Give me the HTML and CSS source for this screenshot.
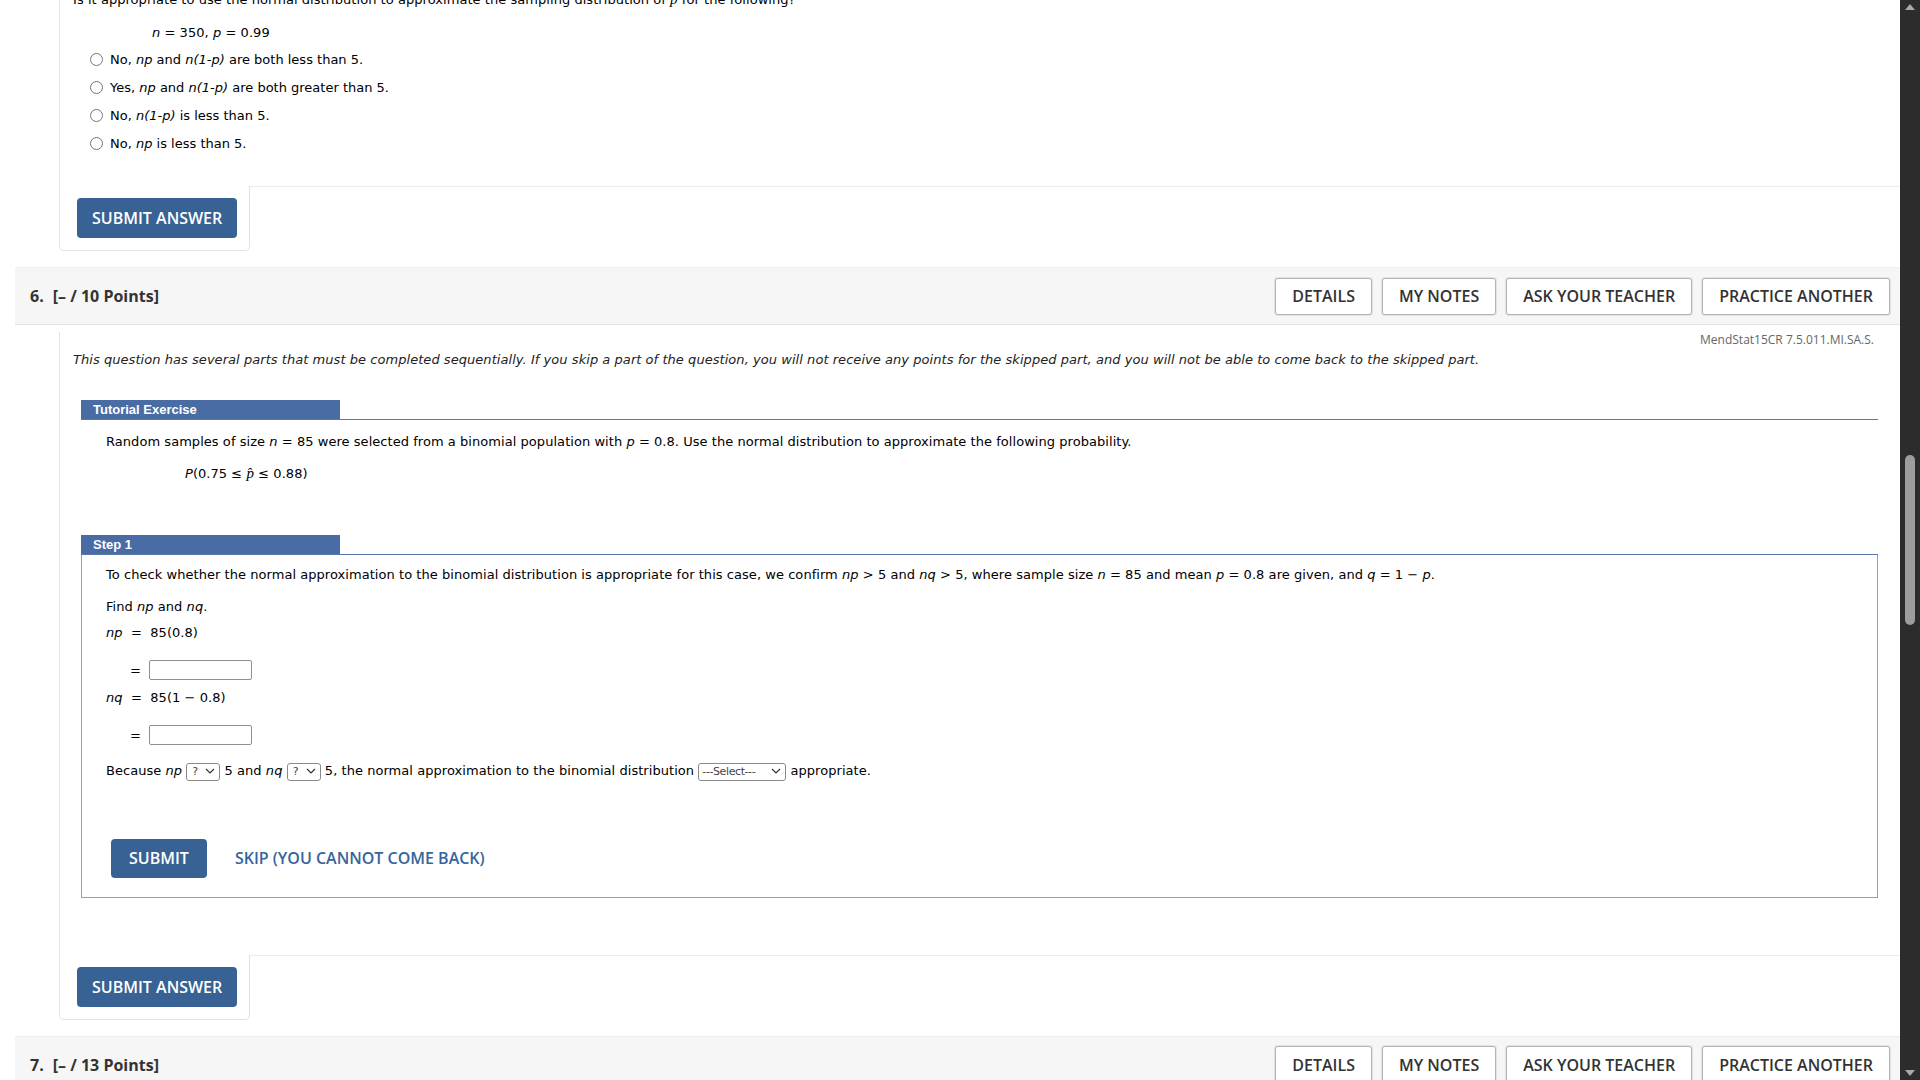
FILE: index.html
```html
<!DOCTYPE html>
<html lang="en">

<head>
  <meta charset="UTF-8" />
  <title>Assignment</title>
  <link rel="stylesheet" href="styles.css">
</head>

<body>
  <div class="page">

    <!-- question 5 (scrolled, only bottom visible) -->
    <div class="question">
      <div class="q-body q-body-short">
        <p class="line">Is it appropriate to use the normal distribution to approximate the sampling distribution of <span class="phat">p&#770;</span> for the following?</p>
        <p class="line given"><i>n</i> = 350, <i>p</i> = 0.99</p>
        <div class="choices">
          <label class="choice"><input type="radio" name="q5" class="radio" />No, <i>np</i> and <i>n(1-p)</i> are both less than 5.</label>
          <label class="choice"><input type="radio" name="q5" class="radio" />Yes, <i>np</i> and <i>n(1-p)</i> are both greater than 5.</label>
          <label class="choice"><input type="radio" name="q5" class="radio" />No, <i>n(1-p)</i> is less than 5.</label>
          <label class="choice"><input type="radio" name="q5" class="radio" />No, <i>np</i> is less than 5.</label>
        </div>
      </div>
      <div class="q-foot">
        <div class="submit-tab"><button class="submit-btn">SUBMIT ANSWER</button></div>
        <div class="foot-rest"></div>
      </div>
    </div>

    <!-- question 6 -->
    <div class="question">
      <div class="q-head">
        <span class="q-num">6.</span>
        <span class="q-points">[&ndash; / 10 Points]</span>
        <div class="q-tools">
          <button class="tool-btn">DETAILS</button>
          <button class="tool-btn">MY NOTES</button>
          <button class="tool-btn">ASK YOUR TEACHER</button>
          <button class="tool-btn">PRACTICE ANOTHER</button>
        </div>
      </div>

      <div class="q-body">
        <div class="qid">MendStat15CR 7.5.011.MI.SA.S.</div>
        <p class="note">This question has several parts that must be completed sequentially. If you skip a part of the question, you will not receive any points for the skipped part, and you will not be able to come back to the skipped part.</p>

        <div class="tutorial">
          <div class="label-row"><div class="label">Tutorial Exercise</div></div>
          <p class="line tut-text">Random samples of size <i>n</i> = 85 were selected from a binomial population with <i>p</i> = 0.8. Use the normal distribution to approximate the following probability.</p>
          <p class="line tut-prob"><i>P</i>(0.75 &le; <span class="phat">p&#770;</span> &le; 0.88)</p>
        </div>

        <div class="step">
          <div class="label-row"><div class="label">Step 1</div></div>
          <div class="step-box">
            <p class="line">To check whether the normal approximation to the binomial distribution is appropriate for this case, we confirm <i>np</i> &gt; 5 and <i>nq</i> &gt; 5, where sample size <i>n</i> = 85 and mean <i>p</i> = 0.8 are given, and <i>q</i> = 1 &minus; <i>p</i>.</p>
            <p class="line find">Find <i>np</i> and <i>nq</i>.</p>
            <p class="line calc"><i>np</i> &nbsp;= &nbsp;85(0.8)</p>
            <div class="eq-row"><span class="eq">=</span><input type="text" class="answer" /></div>
            <p class="line calc-2"><i>nq</i> &nbsp;= &nbsp;85(1 &minus; 0.8)</p>
            <div class="eq-row"><span class="eq">=</span><input type="text" class="answer" /></div>
            <p class="line because">Because <i>np</i>
              <span class="pick-wrap"><select class="pick"><option>?</option></select><svg class="chev" viewBox="0 0 10 6"><path d="M1 1 L5 5 L9 1" /></svg></span>
              5 and <i>nq</i>
              <span class="pick-wrap"><select class="pick"><option>?</option></select><svg class="chev" viewBox="0 0 10 6"><path d="M1 1 L5 5 L9 1" /></svg></span>
              5, the normal approximation to the binomial distribution
              <span class="pick-wrap"><select class="pick pick-wide"><option>---Select---</option></select><svg class="chev" viewBox="0 0 10 6"><path d="M1 1 L5 5 L9 1" /></svg></span>
              appropriate.</p>
            <div class="actions">
              <button class="step-submit">SUBMIT</button>
              <a class="skip" href="#">SKIP (YOU CANNOT COME BACK)</a>
            </div>
          </div>
        </div>
      </div>

      <div class="q-foot">
        <div class="submit-tab"><button class="submit-btn">SUBMIT ANSWER</button></div>
        <div class="foot-rest"></div>
      </div>
    </div>

    <!-- question 7 -->
    <div class="question">
      <div class="q-head">
        <span class="q-num">7.</span>
        <span class="q-points">[&ndash; / 13 Points]</span>
        <div class="q-tools">
          <button class="tool-btn">DETAILS</button>
          <button class="tool-btn">MY NOTES</button>
          <button class="tool-btn">ASK YOUR TEACHER</button>
          <button class="tool-btn">PRACTICE ANOTHER</button>
        </div>
      </div>
      <div class="q-body q-body-short"></div>
    </div>

  </div>

  <div class="scrollbar">
    <span class="arrow arrow-up"></span>
    <span class="thumb"></span>
    <span class="arrow arrow-down"></span>
  </div>
</body>

</html>
```

FILE: styles.css
```css
/* Base Reset */
* {
  box-sizing: border-box;
}

html {
  overflow: hidden;
}

body {
  margin: 0;
  background-color: #fff;
  color: #000;
  font-family: 'DejaVu Sans', Verdana, sans-serif;
  font-size: 13px;
}

.page {
  margin-top: -10px;
  margin-right: 20px;
}

.line {
  margin: 0;
  line-height: 18px;
  letter-spacing: 0.05px;
}

.phat {
  font-family: 'Liberation Serif', serif;
  font-style: italic;
  font-size: 15px;
}

/* Question blocks */
.question {
  margin-left: 15px;
}

.question + .question {
  margin-top: 16px;
}

.q-head {
  display: flex;
  align-items: center;
  height: 58px;
  padding: 0 10px 0 15px;
  background-color: #f6f6f6;
  border-top: 1px solid #efefef;
  border-bottom: 1px solid #e4e4e4;
  font-family: 'Open Sans', sans-serif;
  color: #333;
}

.q-num {
  font-size: 16px;
  font-weight: 700;
  margin-right: 9px;
}

.q-points {
  font-size: 16px;
  font-weight: 700;
}

.q-tools {
  margin-left: auto;
  display: flex;
  gap: 10px;
}

.tool-btn {
  height: 37px;
  padding: 0 16px;
  background-color: #fff;
  border: 1px solid #b4b4b4;
  border-radius: 3px;
  box-shadow: 0 0 0 1px #e2e2e2;
  font-family: 'Open Sans', sans-serif;
  font-size: 16px;
  font-weight: 600;
  color: #333;
}

.q-body {
  margin-left: 44px;
  padding: 0 22px 57px 13px;
  border-left: 1px solid #e3e3e3;
}

.q-body-short {
  padding-bottom: 28px;
}

/* Question 5 */
.given {
  margin-top: 15px;
  padding-left: 79px;
}

.choices {
  margin-top: 4px;
}

.choice {
  display: block;
  padding: 5px 0 5px 17px;
  line-height: 18px;
}

.radio {
  width: 13px;
  height: 13px;
  margin: 0 7px 0 0;
  vertical-align: -2px;
}

/* Submit footer */
.q-foot {
  display: flex;
  margin-left: 44px;
}

.submit-tab {
  padding: 12px 12px 12px 17px;
  border: 1px solid #e2e2e2;
  border-top: none;
  border-radius: 0 0 5px 5px;
}

.foot-rest {
  flex: 1;
  border-top: 1px solid #ececec;
}

.submit-btn {
  height: 40px;
  padding: 0 15px;
  background-color: #386294;
  color: #fff;
  border: none;
  border-radius: 4px;
  font-family: 'Open Sans', sans-serif;
  font-size: 16px;
  font-weight: 600;
}

/* Question 6 body */
.qid {
  margin-top: 7px;
  padding-right: 4px;
  text-align: right;
  font-family: 'Open Sans', sans-serif;
  font-size: 12px;
  line-height: 16px;
  color: #666;
}

.note {
  margin: 3px 0 0;
  font-size: 13px;
  font-style: italic;
  line-height: 17px;
  letter-spacing: 0.05px;
  color: #222;
}

.tutorial {
  margin: 32px 0 0 8px;
}

.label-row {
  border-bottom: 1px solid #5a77aa;
}

.label {
  width: 259px;
  height: 19px;
  padding-left: 12px;
  background-color: #4a6ca5;
  color: #fff;
  font-family: 'Liberation Sans', Arial, sans-serif;
  font-size: 13px;
  font-weight: bold;
  line-height: 19px;
}

.tut-text {
  margin-top: 13px;
  padding-left: 25px;
}

.tut-prob {
  margin-top: 13px;
  padding-left: 104px;
}

.step {
  margin: 52px 0 0 8px;
}

.step-box {
  padding: 11px 24px 19px 24px;
  border: 1px solid #8da1c6;
  border-top: none;
}

.find {
  margin-top: 14px;
}

.calc {
  margin-top: 8px;
}

.calc-2 {
  margin-top: 8px;
}

.eq-row {
  display: flex;
  align-items: center;
  height: 22px;
  margin-top: 17px;
  padding-left: 24px;
}

.eq {
  margin-right: 8px;
}

.answer {
  width: 103px;
  height: 20px;
  border: 1px solid #8f8f8f;
  border-radius: 2px;
  padding: 0 4px;
}

.because {
  margin-top: 16px;
}

/* Drop-downs */
.pick-wrap {
  position: relative;
  display: inline-block;
}

.pick {
  appearance: none;
  width: 34px;
  height: 18px;
  padding: 0 0 0 5px;
  background-color: #fff;
  border: 1px solid #8a8a8a;
  border-radius: 3px;
  font-family: 'DejaVu Sans', Verdana, sans-serif;
  font-size: 11px;
  color: #444;
}

.pick-wide {
  width: 88px;
  padding-left: 3px;
  letter-spacing: -0.4px;
}

.chev {
  position: absolute;
  right: 5px;
  top: 6px;
  width: 10px;
  height: 6px;
  fill: none;
  stroke: #333;
  stroke-width: 1.2;
  pointer-events: none;
}

.actions {
  display: flex;
  align-items: center;
  gap: 28px;
  margin-top: 58px;
  padding-left: 5px;
}

.step-submit {
  height: 39px;
  padding: 0 18px;
  background-color: #386294;
  color: #fff;
  border: none;
  border-radius: 4px;
  font-family: 'Open Sans', sans-serif;
  font-size: 16px;
  font-weight: 600;
}

.skip {
  color: #36659c;
  text-decoration: none;
  font-family: 'Open Sans', sans-serif;
  font-size: 16px;
  font-weight: 600;
}

/* Fake window scrollbar */
.scrollbar {
  position: fixed;
  top: 0;
  right: 0;
  width: 20px;
  height: 100%;
  background-color: #2c2c2c;
}

.thumb {
  position: absolute;
  top: 455px;
  left: 5px;
  width: 10px;
  height: 170px;
  border-radius: 5px;
  background-color: #9d9d9d;
}

.arrow {
  position: absolute;
  left: 5px;
  width: 0;
  height: 0;
  border-left: 5px solid transparent;
  border-right: 5px solid transparent;
}

.arrow-up {
  top: 4px;
  border-bottom: 6px solid #a9a9a9;
}

.arrow-down {
  bottom: 4px;
  border-top: 6px solid #a9a9a9;
}
```
